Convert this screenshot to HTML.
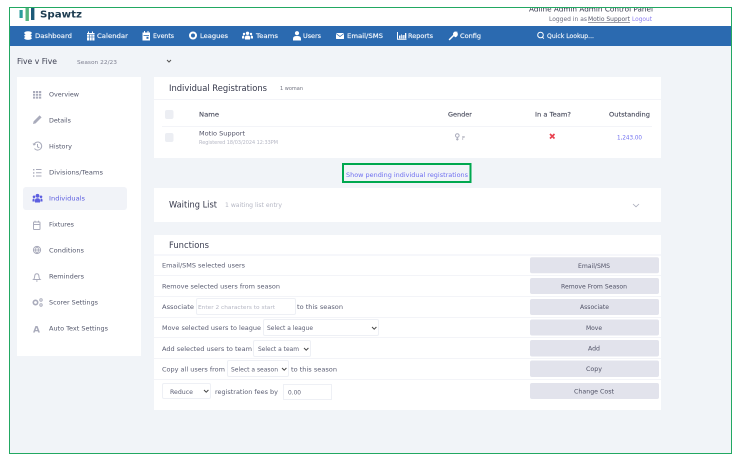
<!DOCTYPE html>
<html><head><meta charset="utf-8"><style>
html,body{margin:0;padding:0;background:#fff;width:740px;height:461px;overflow:hidden}
svg{display:block}
#r{position:absolute;left:0;top:0;filter:blur(.28px)}
text{font-family:"DejaVu Sans","Liberation Sans",sans-serif}
.n{fill:#f2f6fb;font-size:6.3px;stroke:#f2f6fb;stroke-width:.16px}
.s{fill:#565a6e;font-size:6.3px}
.f{fill:#5c5f74;font-size:6.3px}
.h{fill:#34374a;font-size:9.2px}
.th{fill:#4a4d5e;font-size:6.3px;stroke:#4a4d5e;stroke-width:.14px}
.l{fill:#b5b7c4;font-size:5.4px}
.b{fill:#505266;font-size:6.2px}
.p{fill:#6f6ff0;font-size:6.3px}
.card{fill:#fff}
.sep{stroke:#f3f4f8;stroke-width:1}
.in{fill:#fff;stroke:#eef0f5;stroke-width:1}
.btn{fill:#e2e3ec}
.ic{fill:#a9abbb}
.ics{fill:none;stroke:#a9abbb;stroke-width:1}
.w{fill:#fff}
</style></head><body>
<svg id="r" width="740" height="461" viewBox="0 0 740 461" xmlns="http://www.w3.org/2000/svg">
<rect width="740" height="461" fill="#fff"/>
<rect x="9.5" y="7.5" width="722" height="446" fill="#f1f4f8"/>
<rect x="10" y="8" width="721" height="18" fill="#fff"/>
<rect x="10" y="26" width="721" height="20" fill="#2b6ab0"/>

<!-- logo -->
<rect x="19.5" y="10" width="3.2" height="8" fill="#2b9c9c"/>
<rect x="25.5" y="8" width="3.4" height="13" fill="#55b57f"/>
<rect x="31" y="8" width="3.4" height="12" fill="#1d5a78"/>
<text x="40" y="17.5" font-size="9.5" font-weight="bold" fill="#1d3c50" textLength="42" lengthAdjust="spacingAndGlyphs">Spawtz</text>

<!-- top right -->
<svg x="500" y="8" width="200" height="10" viewBox="500 8 200 10"><text x="529" y="11.5" font-size="7" fill="#33364a" textLength="124" lengthAdjust="spacingAndGlyphs">Adline Admin Admin Control Panel</text></svg>
<text x="549" y="21" font-size="5.8" fill="#6b6d7e" textLength="38" lengthAdjust="spacingAndGlyphs">Logged in as</text>
<text x="588" y="21" font-size="5.8" fill="#55576a" text-decoration="underline" textLength="42" lengthAdjust="spacingAndGlyphs">Motio Support</text>
<text x="632" y="21" font-size="5.8" fill="#8a7cf0" textLength="20" lengthAdjust="spacingAndGlyphs">Logout</text>

<!-- nav -->
<g>
<text class="n" x="35" y="38" textLength="37" lengthAdjust="spacingAndGlyphs">Dashboard</text>
<text class="n" x="97" y="38" textLength="31" lengthAdjust="spacingAndGlyphs">Calendar</text>
<text class="n" x="153" y="38" textLength="21" lengthAdjust="spacingAndGlyphs">Events</text>
<text class="n" x="200" y="38" textLength="28" lengthAdjust="spacingAndGlyphs">Leagues</text>
<text class="n" x="256" y="38" textLength="22" lengthAdjust="spacingAndGlyphs">Teams</text>
<text class="n" x="303" y="38" textLength="18" lengthAdjust="spacingAndGlyphs">Users</text>
<text class="n" x="347" y="38" textLength="36" lengthAdjust="spacingAndGlyphs">Email/SMS</text>
<text class="n" x="408" y="38" textLength="25" lengthAdjust="spacingAndGlyphs">Reports</text>
<text class="n" x="460" y="38" textLength="21" lengthAdjust="spacingAndGlyphs">Config</text>
<text class="n" x="547" y="38" textLength="47" lengthAdjust="spacingAndGlyphs">Quick Lookup...</text>
<!-- dashboard -->
<ellipse class="w" cx="28" cy="33" rx="3.8" ry="1.7"/><ellipse class="w" cx="28" cy="35.7" rx="3.8" ry="1.7"/><ellipse class="w" cx="28" cy="38.2" rx="3.8" ry="1.7"/>
<!-- calendar -->
<path class="w" d="M87 33h7.5v7.5H87zM88 31.5h1v2h-1zM92 31.5h1v2h-1z"/>
<path d="M87 34.5h7.5M89.5 34.5v6M92 34.5v6M87 37h7.5" stroke="#2b6ab0" stroke-width=".6"/>
<!-- events -->
<path class="w" d="M142.5 32.5h7.5v8h-7.5zM144 31h1v2h-1zM147.5 31h1v2h-1z"/>
<rect x="143.5" y="35" width="5.5" height=".8" fill="#2b6ab0"/><rect x="146.5" y="36.8" width="2" height="2" fill="#2b6ab0"/>
<!-- leagues -->
<circle cx="193" cy="35.5" r="3" fill="none" stroke="#fff" stroke-width="2"/>
<!-- teams -->
<circle class="w" cx="247.5" cy="33.3" r="1.7"/><circle class="w" cx="244" cy="34" r="1.2"/><circle class="w" cx="251" cy="34" r="1.2"/>
<path class="w" d="M245 39.5v-2.5q0-1.5 2.5-1.5t2.5 1.5v2.5zM242 38.5v-1.5q0-1.5 2-1.5l.5 3zM253 38.5v-1.5q0-1.5-2-1.5l-.5 3z"/>
<!-- users -->
<circle class="w" cx="297" cy="33.2" r="2.1"/><path class="w" d="M293 40.5v-1.8q0-2.7 4-2.7t4 2.7v1.8z"/>
<!-- email -->
<rect class="w" x="336" y="33" width="8" height="6" rx=".5"/><path d="M336 33.5l4 3 4-3" fill="none" stroke="#2b6ab0" stroke-width=".7"/>
<!-- reports -->
<path class="w" d="M397 32h1v6.7h8.5v1H397zM399 35.5h1.5v3H399zM401.2 34l1.3 1.5v3h-1.3zM403.2 35h1.3v3.5h-1.3zM405 33h1.3v5.5H405z"/>
<!-- config -->
<path d="M449.5 39.5l4.5-4.5M454 35.2q-.8-2 1-2.9l1 .1-1.2 1.3.8.9 1.4-1.1q.5 2-1.6 2.9z" stroke="#fff" stroke-width="1.5" fill="#fff" stroke-linecap="round"/>
<!-- search -->
<circle cx="540.5" cy="35" r="2.8" fill="none" stroke="#fff" stroke-width="1"/><path d="M542.5 37.2l1.3 1.5" stroke="#fff" stroke-width="1"/>
</g>

<!-- sub header -->
<text x="17" y="64" font-size="7.5" fill="#3f4254" textLength="40" lengthAdjust="spacingAndGlyphs">Five v Five</text>
<text x="77" y="64" font-size="5.6" fill="#7d7f90" textLength="40" lengthAdjust="spacingAndGlyphs">Season 22/23</text>
<path d="M167 60l2 2 2-2" fill="none" stroke="#555" stroke-width="1"/>

<!-- sidebar -->
<rect class="card" x="17" y="77" width="124" height="279"/>
<rect x="23" y="187" width="104" height="23" rx="3" fill="#f1f3f8"/>
<g>
<text class="s" x="49" y="96.5" textLength="30" lengthAdjust="spacingAndGlyphs">Overview</text>
<text class="s" x="49" y="122.5" textLength="22" lengthAdjust="spacingAndGlyphs">Details</text>
<text class="s" x="49" y="148.5" textLength="23" lengthAdjust="spacingAndGlyphs">History</text>
<text class="s" x="49" y="174.5" textLength="54" lengthAdjust="spacingAndGlyphs">Divisions/Teams</text>
<text x="49" y="200.5" font-size="6.3" fill="#5d5fe0" textLength="36" lengthAdjust="spacingAndGlyphs">Individuals</text>
<text class="s" x="49" y="226.5" textLength="25" lengthAdjust="spacingAndGlyphs">Fixtures</text>
<text class="s" x="49" y="252.5" textLength="35" lengthAdjust="spacingAndGlyphs">Conditions</text>
<text class="s" x="49" y="278.5" textLength="35" lengthAdjust="spacingAndGlyphs">Reminders</text>
<text class="s" x="49" y="304.5" textLength="49" lengthAdjust="spacingAndGlyphs">Scorer Settings</text>
<text class="s" x="49" y="330.5" textLength="59" lengthAdjust="spacingAndGlyphs">Auto Text Settings</text>
<!-- overview grid -->
<path class="ic" d="M33 91h2.2v2H33zM36 91h2.2v2H36zM39 91h2.2v2H39zM33 93.8h2.2v2H33zM36 93.8h2.2v2H36zM39 93.8h2.2v2H39zM33 96.6h2.2v2H33zM36 96.6h2.2v2H36zM39 96.6h2.2v2H39z"/>
<!-- pencil -->
<path class="ic" d="M33 124l.6-2.6 6-6 2 2-6 6z"/>
<!-- history -->
<path class="ics" d="M34 144.5a4 4 0 1 1 .5 4M37.5 144v2.8l1.8 1M33 143.5l1 1.5 1.5-.9"/>
<!-- list -->
<path class="ics" d="M36 169.5h5.5M36 172.8h5.5M36 176h5.5"/><path class="ic" d="M33 169h1.4v1.4H33zM33 172.2h1.4v1.4H33zM33 175.4h1.4v1.4H33z"/>
<!-- users -->
<circle cx="37.5" cy="195.8" r="1.9" fill="#5d5fe0"/><circle cx="34" cy="196.8" r="1.3" fill="#5d5fe0"/><circle cx="41" cy="196.8" r="1.3" fill="#5d5fe0"/>
<path fill="#5d5fe0" d="M35 202.5v-2.3q0-2 2.5-2t2.5 2v2.3zM32.5 201.5v-1.5q0-1.5 1.8-1.5l.5 3zM42.5 201.5v-1.5q0-1.5-1.8-1.5l-.5 3z"/>
<!-- fixtures -->
<rect class="ics" x="33.5" y="222" width="6.5" height="7.5" rx=".6"/><path class="ics" d="M33.5 224.5h6.5M35 220.8v1.8M38.5 220.8v1.8"/>
<!-- globe -->
<circle class="ics" cx="37" cy="250" r="3.6"/><path class="ics" d="M33.4 250h7.2M37 246.4c-2 2.2-2 5 0 7.2M37 246.4c2 2.2 2 5 0 7.2"/>
<!-- bell -->
<path class="ics" d="M33.5 279.5c1.2-1 1-2 1.2-3.5.2-1.5 1-2.2 2.1-2.2s1.9.7 2.1 2.2c.2 1.5 0 2.5 1.2 3.5zM36 281h1.6"/>
<!-- gears -->
<circle cx="35.5" cy="302.5" r="2.2" fill="none" stroke="#a9abbb" stroke-width="1.6"/><circle cx="41" cy="300" r="1.2" fill="none" stroke="#a9abbb" stroke-width="1"/><circle cx="41" cy="305" r="1.2" fill="none" stroke="#a9abbb" stroke-width="1"/>
<!-- A -->
<text x="33" y="332.5" font-size="9" font-weight="bold" fill="#a9abbb">A</text>
</g>

<!-- card 1 -->
<rect class="card" x="154" y="77" width="507" height="81"/>
<line class="sep" x1="154" y1="99.5" x2="661" y2="99.5"/>
<line class="sep" x1="162" y1="126.5" x2="652" y2="126.5"/>
<text class="h" x="169" y="91" textLength="98" lengthAdjust="spacingAndGlyphs">Individual Registrations</text>
<text x="280" y="90" font-size="5" fill="#70727f" textLength="23" lengthAdjust="spacingAndGlyphs">1 woman</text>
<rect x="165" y="110" width="8.5" height="9" rx="2" fill="#eceef3"/>
<rect x="165" y="133" width="8.5" height="9" rx="2" fill="#eceef3"/>
<text class="th" x="199" y="116.5" textLength="20" lengthAdjust="spacingAndGlyphs">Name</text>
<text class="th" x="448" y="116.5" textLength="24" lengthAdjust="spacingAndGlyphs">Gender</text>
<text class="th" x="535" y="116.5" textLength="36" lengthAdjust="spacingAndGlyphs">In a Team?</text>
<text class="th" x="609" y="116.5" textLength="41" lengthAdjust="spacingAndGlyphs">Outstanding</text>
<text x="199" y="135.5" font-size="6.4" fill="#55566a" textLength="46" lengthAdjust="spacingAndGlyphs">Motio Support</text>
<text class="l" x="199" y="144" textLength="79" lengthAdjust="spacingAndGlyphs">Registered 18/03/2024 12:33PM</text>
<circle cx="457.3" cy="135.5" r="1.8" class="ics"/><path class="ics" d="M457.3 137.3v3.2M456 139.2h2.6"/>
<text x="462" y="139.8" font-size="5.5" fill="#9a9cab">F</text>
<path d="M550 134l4.5 4.5M554.5 134L550 138.5" stroke="#e8414f" stroke-width="1.7" fill="none"/>
<text class="p" x="617" y="139.5" textLength="25" lengthAdjust="spacingAndGlyphs">1,243.00</text>

<!-- highlighted link -->
<rect x="343" y="164" width="127.5" height="18" fill="none" stroke="#00a84f" stroke-width="2"/>
<text class="p" x="346" y="177" textLength="122" lengthAdjust="spacingAndGlyphs">Show pending individual registrations</text>

<!-- waiting -->
<rect class="card" x="154" y="188" width="507" height="34"/>
<text class="h" x="169" y="207.5" textLength="48" lengthAdjust="spacingAndGlyphs">Waiting List</text>
<text class="l" x="225" y="207" style="font-size:6px" textLength="57" lengthAdjust="spacingAndGlyphs">1 waiting list entry</text>
<path d="M633 204l3 2.8 3-2.8" fill="none" stroke="#a9abbb" stroke-width=".8"/>

<!-- functions -->
<rect class="card" x="154" y="235" width="507" height="175"/>
<rect x="154" y="254" width="507" height="2" fill="#f6f7fb"/>
<text x="169" y="248" font-size="8.5" fill="#3a3d50" textLength="40" lengthAdjust="spacingAndGlyphs">Functions</text>
<g class="sep">
<line x1="154" y1="275.5" x2="661" y2="275.5"/>
<line x1="154" y1="296.5" x2="661" y2="296.5"/>
<line x1="154" y1="317.5" x2="661" y2="317.5"/>
<line x1="154" y1="337.5" x2="661" y2="337.5"/>
<line x1="154" y1="358.5" x2="661" y2="358.5"/>
<line x1="154" y1="379.5" x2="661" y2="379.5"/>
</g>
<text class="f" x="162" y="267.5" textLength="83" lengthAdjust="spacingAndGlyphs">Email/SMS selected users</text>
<text class="f" x="162" y="288.5" textLength="118" lengthAdjust="spacingAndGlyphs">Remove selected users from season</text>
<text class="f" x="162" y="309" textLength="32" lengthAdjust="spacingAndGlyphs">Associate</text>
<rect class="in" x="196.5" y="298.5" width="99" height="16" rx="1.5"/>
<text class="l" x="198" y="309" textLength="77" lengthAdjust="spacingAndGlyphs">Enter 2 characters to start</text>
<text class="f" x="297" y="309" textLength="46" lengthAdjust="spacingAndGlyphs">to this season</text>
<text class="f" x="162" y="330" textLength="99" lengthAdjust="spacingAndGlyphs">Move selected users to league</text>
<rect class="in" x="263.5" y="319.5" width="115" height="16" rx="1.5"/>
<text class="f" x="267" y="330" textLength="46" lengthAdjust="spacingAndGlyphs">Select a league</text>
<path d="M372 327l2.2 2.2 2.2-2.2" fill="none" stroke="#444" stroke-width="1"/>
<text class="f" x="162" y="351" textLength="90" lengthAdjust="spacingAndGlyphs">Add selected users to team</text>
<rect class="in" x="253.5" y="340.5" width="57" height="16" rx="1.5"/>
<text class="f" x="258" y="351" textLength="41" lengthAdjust="spacingAndGlyphs">Select a team</text>
<path d="M304 348l2.2 2.2 2.2-2.2" fill="none" stroke="#444" stroke-width="1"/>
<text class="f" x="162" y="371.5" textLength="63" lengthAdjust="spacingAndGlyphs">Copy all users from</text>
<rect class="in" x="227.5" y="360.5" width="61" height="16" rx="1.5"/>
<text class="f" x="231" y="371.5" textLength="47" lengthAdjust="spacingAndGlyphs">Select a season</text>
<path d="M282 368l2.2 2.2 2.2-2.2" fill="none" stroke="#444" stroke-width="1"/>
<text class="f" x="291" y="371.5" textLength="46" lengthAdjust="spacingAndGlyphs">to this season</text>
<rect class="in" x="162.5" y="383.5" width="48" height="15" rx="1.5"/>
<text class="f" x="170" y="394" textLength="23" lengthAdjust="spacingAndGlyphs">Reduce</text>
<path d="M204 390l2.2 2.2 2.2-2.2" fill="none" stroke="#444" stroke-width="1"/>
<text class="f" x="215" y="394" textLength="63" lengthAdjust="spacingAndGlyphs">registration fees by</text>
<rect class="in" x="283.5" y="384.5" width="48" height="15"/>
<text class="f" x="288" y="394.5" textLength="13" lengthAdjust="spacingAndGlyphs">0.00</text>

<!-- buttons -->
<rect class="btn" x="530" y="257.3" width="129" height="16" rx="2"/>
<rect class="btn" x="530" y="278" width="129" height="16" rx="2"/>
<rect class="btn" x="530" y="299" width="129" height="16" rx="2"/>
<rect class="btn" x="530" y="319.5" width="129" height="16" rx="2"/>
<rect class="btn" x="530" y="340" width="129" height="16.5" rx="2"/>
<rect class="btn" x="530" y="360.5" width="129" height="16.5" rx="2"/>
<rect class="btn" x="530" y="383" width="129" height="16" rx="2"/>
<text class="b" x="578" y="267.8" textLength="32" lengthAdjust="spacingAndGlyphs">Email/SMS</text>
<text class="b" x="561" y="288.5" textLength="66" lengthAdjust="spacingAndGlyphs">Remove From Season</text>
<text class="b" x="580" y="309.2" textLength="29" lengthAdjust="spacingAndGlyphs">Associate</text>
<text class="b" x="586" y="330" textLength="16" lengthAdjust="spacingAndGlyphs">Move</text>
<text class="b" x="588" y="350.5" textLength="12" lengthAdjust="spacingAndGlyphs">Add</text>
<text class="b" x="586" y="371" textLength="16" lengthAdjust="spacingAndGlyphs">Copy</text>
<text class="b" x="574" y="393.5" textLength="40" lengthAdjust="spacingAndGlyphs">Change Cost</text>

<!-- frame -->
<rect x="9.5" y="7.5" width="722" height="446" fill="none" stroke="#22a862" stroke-width="1"/>
</svg>
</body></html>
